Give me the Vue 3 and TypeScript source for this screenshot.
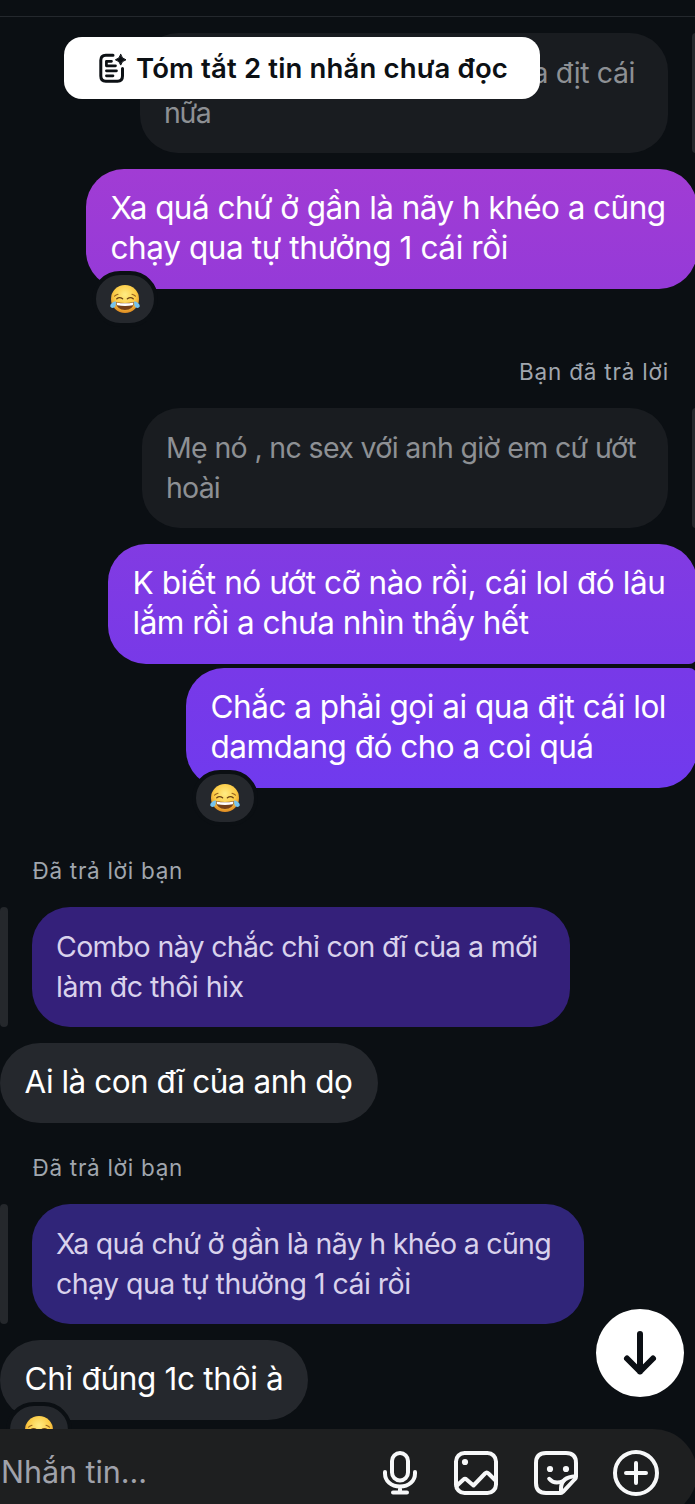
<script setup lang="ts">
import { nextTick, onMounted, ref } from 'vue'

interface Line {
  text: string
  width: number
}

interface Entry {
  kind: 'label' | 'quote' | 'bubble'
  side: 'in' | 'out'
  cls: string
  lines: Line[]
  reaction?: boolean
}

const entries: Entry[] = [
  { kind: 'quote', side: 'out', cls: 'q1', lines: [{ text: 'qua địt cái', width: 136 }, { text: 'nữa', width: 46.5 }] },
  {
    kind: 'bubble', side: 'out', cls: 'b1', reaction: true,
    lines: [{ text: 'Xa quá chứ ở gần là nãy h khéo a cũng', width: 555 }, { text: 'chạy qua tự thưởng 1 cái rồi', width: 397.5 }],
  },
  { kind: 'label', side: 'out', cls: 'l1', lines: [{ text: 'Bạn đã trả lời', width: 150 }] },
  {
    kind: 'quote', side: 'out', cls: 'q2',
    lines: [{ text: 'Mẹ nó , nc sex với anh giờ em cứ ướt', width: 470 }, { text: 'hoài', width: 54 }],
  },
  {
    kind: 'bubble', side: 'out', cls: 'b2',
    lines: [{ text: 'K biết nó ướt cỡ nào rồi, cái lol đó lâu', width: 533 }, { text: 'lắm rồi a chưa nhìn thấy hết', width: 396 }],
  },
  {
    kind: 'bubble', side: 'out', cls: 'b3', reaction: true,
    lines: [{ text: 'Chắc a phải gọi ai qua địt cái lol', width: 455.5 }, { text: 'damdang đó cho a coi quá', width: 383 }],
  },
  { kind: 'label', side: 'in', cls: 'l2', lines: [{ text: 'Đã trả lời bạn', width: 150.5 }] },
  {
    kind: 'quote', side: 'in', cls: 'q3',
    lines: [{ text: 'Combo này chắc chỉ con đĩ của a mới', width: 481.5 }, { text: 'làm đc thôi hix', width: 187.5 }],
  },
  { kind: 'bubble', side: 'in', cls: 'b4', lines: [{ text: 'Ai là con đĩ của anh dọ', width: 328 }] },
  { kind: 'label', side: 'in', cls: 'l3', lines: [{ text: 'Đã trả lời bạn', width: 150.5 }] },
  {
    kind: 'quote', side: 'in', cls: 'q4',
    lines: [{ text: 'Xa quá chứ ở gần là nãy h khéo a cũng', width: 495 }, { text: 'chạy qua tự thưởng 1 cái rồi', width: 354.5 }],
  },
  { kind: 'bubble', side: 'in', cls: 'b5', reaction: true, lines: [{ text: 'Chỉ đúng 1c thôi à', width: 259 }] },
]

const root = ref<HTMLElement | null>(null)

// Spreads each text line over its intended measure.
onMounted(async () => {
  await nextTick()
  root.value?.querySelectorAll<HTMLElement>('[data-width]').forEach((el) => {
    const target = Number(el.dataset.width)
    const count = Array.from(el.textContent ?? '').length
    el.style.letterSpacing = `${(target - el.getBoundingClientRect().width) / count}px`
  })
})
</script>

<template>
  <main ref="root" class="screen">
    <svg width="0" height="0" class="defs">
      <defs>
        <radialGradient id="face" cx=".5" cy=".35" r=".65">
          <stop offset="0" stop-color="#ffec84" />
          <stop offset=".6" stop-color="#fccb45" />
          <stop offset="1" stop-color="#de8a22" />
        </radialGradient>
        <symbol id="joy" viewBox="0 0 30 28">
          <circle cx="15" cy="14" r="14" fill="url(#face)" />
          <path d="M4.500 11.200Q6 9.600 8 9.200M25.500 11.200Q24 9.600 22 9.200" fill="none" stroke="#9a6420" stroke-width="1.100" stroke-linecap="round" />
          <path d="M6.800 13.800Q9.500 11.400 12.600 13.800M23.200 13.800Q20.500 11.400 17.400 13.800" fill="none" stroke="#6e4316" stroke-width="1.400" stroke-linecap="round" />
          <path d="M5.800 17Q15 18.800 24.200 17Q23 25 15 25Q7 25 5.800 17Z" fill="#74401a" />
          <path d="M6.400 17.500Q15 19.200 23.600 17.500L22.800 20.300Q15 21.800 7.200 20.300Z" fill="#fff" />
          <path d="M5.800 16.200C2 17-.3 19.500.3 21.600C1 23.600 4.500 23.400 5.400 21Q6 19 5.800 16.200ZM24.200 16.200C28 17 30.300 19.500 29.700 21.600C29 23.600 25.500 23.400 24.600 21Q24 19 24.200 16.200Z" fill="#74c3ee" />
        </symbol>
      </defs>
    </svg>

    <header class="topbar"></header>

    <section class="thread">
      <div v-for="entry in entries" :key="entry.cls" class="row" :class="[entry.kind, entry.side, entry.cls]">
        <div class="body">
          <div v-for="line in entry.lines" :key="line.text" class="line">
            <span :data-width="line.width">{{ line.text }}</span>
          </div>
          <div v-if="entry.reaction" class="reaction">
            <svg width="30" height="28"><use href="#joy" /></svg>
          </div>
        </div>
        <i v-if="entry.kind === 'quote'" class="bar"></i>
      </div>
    </section>

    <button class="summary">
      <svg width="30" height="32" viewBox="0 0 30 32" fill="none" stroke="#0c1014" stroke-linecap="round" stroke-linejoin="round">
        <path d="M15 3.300H7.800Q2.800 3.300 2.800 8.300V24Q2.800 29.200 7.800 29.200H19.500Q24.500 29.200 24.500 24V16.500" stroke-width="3" />
        <path d="M13.500 9.300H8.400V13.800H17.500M8.400 18.800H18.500M8.400 23.800H15" stroke-width="2.700" />
        <path d="M22.700 2.500Q23.700 6.800 28 7.800Q23.700 8.800 22.700 13.100Q21.700 8.800 17.400 7.800Q21.700 6.800 22.700 2.500Z" fill="#0c1014" stroke-width="1" />
      </svg>
      <span class="summary-text" data-width="372">Tóm tắt 2 tin nhắn chưa đọc</span>
    </button>

    <button class="scroll-down">
      <svg width="88" height="88" viewBox="0 0 88 88" fill="none" stroke="#0b0f14" stroke-width="6" stroke-linecap="round" stroke-linejoin="round">
        <path d="M44 25V62.500M31 49.500L44 62.500L57 49.500" />
      </svg>
    </button>

    <footer class="composer">
      <div class="placeholder"><span data-width="146">Nhắn tin...</span></div>
      <div class="tools">
        <svg width="48" height="48" viewBox="0 0 48 48">
          <rect x="16" y="4" width="16" height="27.500" rx="8" />
          <path d="M9 23V24.500C9 32 15 37.500 24 37.500S39 32 39 24.500V23M24 38V43M17 43.500H31" />
        </svg>
        <svg width="48" height="48" viewBox="0 0 48 48">
          <rect x="4" y="4" width="40" height="40" rx="8.500" />
          <circle class="dot" cx="13" cy="13" r="3.100" />
          <path d="M4.500 37L11.500 30.500Q13 29 14.500 30.500L21.500 36.500L33 24.500Q34.700 22.800 36.500 24.500L43.500 31.500" />
        </svg>
        <svg width="48" height="48" viewBox="0 0 48 48">
          <path d="M28.500 44H14Q4 44 4 34V14Q4 4 14 4H34Q44 4 44 14V27.500Q44 29 43 30L31 42.800Q30 44 28.500 44Z" />
          <path d="M29 43.500V39Q29.500 28 43.500 27.300" />
          <path d="M17.200 29.800Q22.500 36 31.500 32" />
          <circle class="dot" cx="18" cy="20" r="3.100" />
          <circle class="dot" cx="34" cy="20" r="3.100" />
        </svg>
        <svg width="48" height="48" viewBox="0 0 48 48">
          <circle cx="24" cy="24" r="21" />
          <path d="M24 14V34M14 24H34" />
        </svg>
      </div>
    </footer>
  </main>
</template>

<style>
body {
  background: #0b0f13;
}
</style>

<style scoped>
.screen {
  position: relative;
  width: 695px;
  height: 1504px;
  overflow: hidden;
  background: #0b0f13;
  font-family: Inter, 'Noto Sans', sans-serif;
  color: #fff;
}

.defs {
  position: absolute;
}

.topbar {
  box-sizing: border-box;
  height: 17px;
  border-bottom: 1px solid #24282d;
}

.thread {
  display: flex;
  flex-direction: column;
  padding-top: 16px;
}

.row {
  display: flex;
  margin-bottom: 16px;
}

.row.out {
  justify-content: flex-end;
}

.line {
  height: 40px;
  line-height: 40px;
  white-space: nowrap;
}

.body {
  position: relative;
  box-sizing: border-box;
}

.label {
  height: 28px;
  margin-bottom: 22px;
  color: #a0a6ae;
  font-size: 22.500px;
}

.label .line {
  height: 28px;
  line-height: 27px;
}

.label.out {
  padding-right: 26px;
}

.label.in {
  padding-left: 32.500px;
}

.l1 {
  margin-top: 53px;
}

.l2 {
  margin-top: 53px;
}

.l3 {
  margin-top: 15px;
}

.quote .body {
  height: 120px;
  padding: 20px 24px;
  border-radius: 38px;
  font-size: 28.500px;
}

.quote.out .body {
  background: #191c20;
  color: #8d9094;
}

.quote.in .body {
  order: 2;
  background: #34207a;
  color: #d9d2ec;
}

.quote.q4 .body {
  background: #302579;
}

.bar {
  width: 8px;
  height: 120px;
  border-radius: 4px;
  background: #25282c;
}

.quote.out .bar {
  margin-left: 24px;
  margin-right: -5px;
}

.quote.in .bar {
  margin-right: 24px;
}

.q1 .body {
  width: 528px;
}

.q1 .line:first-child {
  padding-right: 9px;
  text-align: right;
}

.q2 .body {
  width: 526px;
}

.q3 .body {
  width: 538px;
}

.q4 .body {
  width: 552px;
}

.bubble .body {
  height: 120px;
  padding: 19px 24px 21px;
  border-radius: 38px;
  font-size: 31.500px;
}

.bubble.out .body {
  margin-right: -2px;
}

.bubble.in .body {
  height: 80px;
  border-radius: 40px;
  background: #25282d;
}

.b1 .body {
  width: 611px;
  background: linear-gradient(#a13cd4, #953ad8);
}

.row.b2 {
  margin-bottom: 4px;
}

.b2 .body {
  width: 589px;
  border-bottom-right-radius: 8px;
  background: linear-gradient(#823be2, #7839e8);
}

.b3 .body {
  width: 511px;
  border-top-right-radius: 8px;
  background: linear-gradient(#7839e8, #703aee);
}

.b4 .body {
  width: 378px;
}

.b5 .body {
  width: 308px;
}

.bubble .line {
  padding-left: 0.5px;
}

.reaction {
  position: absolute;
  left: 6px;
  bottom: -38px;
  display: flex;
  align-items: center;
  justify-content: center;
  width: 58px;
  height: 48px;
  border: 4px solid #0b0f13;
  border-radius: 28px;
  background: #25282d;
}

.summary {
  position: absolute;
  left: 64px;
  top: 37px;
  display: flex;
  align-items: center;
  width: 476px;
  height: 62px;
  padding: 0 0 0 34px;
  border: 0;
  border-radius: 18px;
  background: #fff;
  color: #0c1014;
  font-family: inherit;
  font-size: 27.500px;
  font-weight: 600;
  white-space: nowrap;
}

.summary-text {
  margin-left: 8px;
}

.scroll-down {
  position: absolute;
  left: 596px;
  top: 1309px;
  width: 88px;
  height: 88px;
  padding: 0;
  border: 0;
  border-radius: 50%;
  background: #fff;
}

.composer {
  position: absolute;
  left: 0;
  top: 1429px;
  display: flex;
  box-sizing: border-box;
  justify-content: space-between;
  width: 697px;
  height: 88px;
  padding-right: 37px;
  border-radius: 0 44px 44px 0;
  background: #1e1f20;
}

.placeholder {
  height: 86px;
  padding-left: 1px;
  color: #a0a2ab;
  font-size: 30.500px;
  line-height: 86px;
  white-space: nowrap;
}

.tools {
  display: flex;
  align-items: center;
  gap: 32px;
}

.tools svg {
  fill: none;
  stroke: #f7f8f9;
  stroke-width: 4;
  stroke-linecap: round;
  stroke-linejoin: round;
}

.tools svg:first-child {
  margin-right: -4px;
}

.tools .dot {
  fill: #f7f8f9;
  stroke: none;
}
</style>
